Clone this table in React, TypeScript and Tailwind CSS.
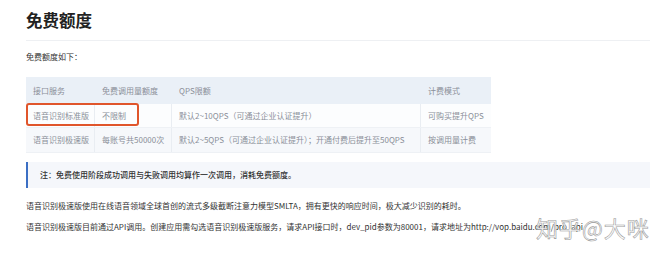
import React from "react";

const cols = "grid grid-cols-[69px_77px_249px_70px]";

const rows = [
  ["语音识别标准版", "不限制", "默认2~10QPS（可通过企业认证提升）", "可购买提升QPS"],
  ["语音识别极速版", "每账号共50000次", "默认2~5QPS（可通过企业认证提升）；开通付费后提升至50QPS", "按调用量计费"],
];

export default function App() {
  return (
    <div className="relative h-[261px] w-[650px] overflow-hidden bg-white pl-[26px] font-['Noto_Sans_CJK_SC','Noto_Sans',sans-serif]">
      <h1 className="pt-[8px] text-[16.5px] font-bold leading-[24px] text-[#222]">免费额度</h1>
      <div className="mt-[8px] border-t border-[#eef0f3]" />

      <p className="mt-[11px] text-[8px] leading-[10px] text-[#333]">免费额度如下：</p>

      <div className="relative mt-[15px] w-[465px] text-[8px] text-[#8a8f99]">
        <div className={`${cols} h-[27px] items-center bg-[#eaf0f7]`}>
          <div className="pl-[7px]">接口服务</div>
          <div className="pl-[7px]">免费调用量额度</div>
          <div className="pl-[7px]">QPS限额</div>
          <div className="pl-[7px]">计费模式</div>
        </div>
        {rows.map((r, i) => (
          <div
            key={i}
            className={`${cols} ${i === 0 ? "h-[24px] bg-[#fcfdfe]" : "h-[25px] bg-[#f6f8fb]"} border-b border-[#eef1f5]`}
          >
            {r.map((c, j) => (
              <div
                key={j}
                className={`flex items-center whitespace-nowrap pl-[7px] ${j < 3 ? "border-r border-[#e9edf2]" : ""}`}
              >
                {c}
              </div>
            ))}
          </div>
        ))}
        <div className="absolute left-0 top-[26px] h-[23px] w-[113px] rounded-[3px] border-2 border-[#e0552b]" />
      </div>

      <div className="mt-[9px] flex h-[26px] items-center border-l-2 border-[#3b6fc4] bg-[#f5f7fb] pl-[12px] text-[8px] font-medium text-[#333]">
        注：免费使用阶段成功调用与失败调用均算作一次调用，消耗免费额度。
      </div>

      <p className="mt-[12px] whitespace-nowrap text-[8px] leading-[12px] text-[#333]">
        语音识别极速版使用在线语音领域全球首创的流式多级截断注意力模型SMLTA，拥有更快的响应时间，极大减少识别的耗时。
      </p>
      <p className="mt-[9px] whitespace-nowrap text-[8px] leading-[12px] text-[#333]">
        语音识别极速版目前通过API调用。创建应用需勾选语音识别极速版服务，请求API接口时，dev_pid参数为80001，请求地址为http://vop.baidu.com/pro_api
      </p>

      <div className="absolute left-[536px] top-[213px] text-[22px] leading-[28px] tracking-[1px] text-white/90 [-webkit-text-stroke:0.6px_#9a9a9a]">
        知乎@大咪
      </div>
    </div>
  );
}
